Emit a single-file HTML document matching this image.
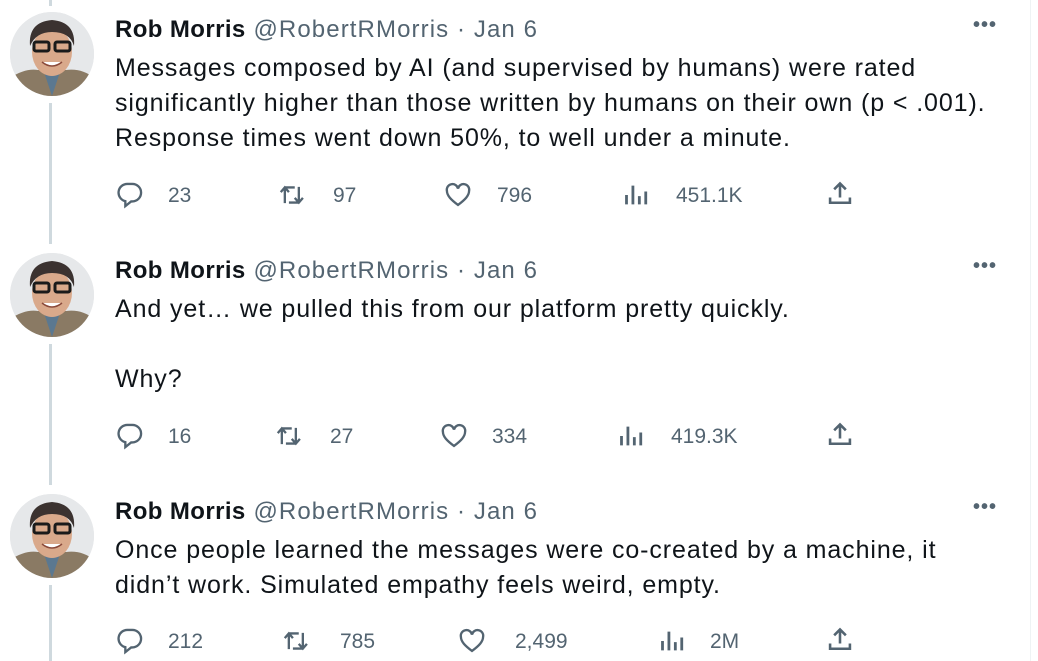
<!DOCTYPE html>
<html><head><meta charset="utf-8"><style>
*{margin:0;padding:0;box-sizing:border-box}
body{width:1038px;height:661px;background:#fff;position:relative;overflow:hidden;font-family:"Liberation Sans",sans-serif;color:#0f1419}
.line{position:absolute;left:49px;width:3px;background:#cfd9de}
.av{position:absolute;left:10px;width:84px;height:84px;border-radius:50%;overflow:hidden;background:#e4e6e8}
.t{position:absolute;left:115px;font-size:25px;white-space:nowrap;letter-spacing:0.9px}
.hd{position:absolute;left:115px;font-size:24px;white-space:nowrap;letter-spacing:1.1px}
.hd b{color:#0f1419;letter-spacing:0.4px}
.hd span{color:#536471}
.dots{position:absolute;left:973px;font-size:20px;color:#536471;letter-spacing:1px;font-weight:bold}
.ic{position:absolute}
.n{position:absolute;font-size:21px;color:#536471}
.border{position:absolute;left:1030px;top:0;width:1px;height:661px;background:#eff3f4}
</style></head><body>
<div class="border"></div>
<div class="line" style="top:0;height:6px"></div>
<div class="line" style="top:103px;height:141px"></div>
<div class="line" style="top:344px;height:141px"></div>
<div class="line" style="top:585px;height:76px"></div>

<svg width="0" height="0" style="position:absolute">
<defs>
<g id="face">
<rect width="84" height="84" fill="#e6e8ea"/>
<path d="M0 84 L0 66 Q15 56 28 58 L56 58 Q72 56 84 66 L84 84Z" fill="#8a7a64"/>
<path d="M34 60 L42 84 L50 60Z" fill="#5b7890"/>
<ellipse cx="42" cy="40" rx="20" ry="24" fill="#d9a98b"/>
<path d="M20 34 Q18 10 42 8 Q66 10 64 34 Q60 20 42 20 Q26 20 20 34Z" fill="#3b3230"/>
<rect x="24" y="30" width="15" height="9" rx="2" fill="none" stroke="#1a1a1a" stroke-width="3"/>
<rect x="45" y="30" width="15" height="9" rx="2" fill="none" stroke="#1a1a1a" stroke-width="3"/>
<path d="M32 50 Q42 58 52 50" fill="#fff" stroke="#8a4a3a" stroke-width="1.5"/>
</g>
<g id="reply"><path d="M10 2.5h4a7.5 7.5 0 0 1 0 15h-1l-5 4v-4.2A7.5 7.5 0 0 1 10 2.5z" fill="none" stroke="#536471" stroke-width="2"/></g>
<g id="rt"><path d="M5 19V6.5M1.5 9.5L5 5.5l3.5 4M5 5.5h8.5M17 5v12.5M13.5 14.5L17 18.5l3.5-4M17 18.5H8.5" fill="none" stroke="#536471" stroke-width="2"/></g>
<g id="like"><path d="M12 20.5C6 16 2.5 12.5 2.5 8.5A4.8 4.8 0 0 1 12 6.5a4.8 4.8 0 0 1 9.5 2c0 4-3.5 7.5-9.5 12z" fill="none" stroke="#536471" stroke-width="2"/></g>
<g id="views"><path d="M3 20V12M8.5 20V4M14 20V13M19.5 20V9" stroke="#536471" stroke-width="2.4"/></g>
<g id="share"><path d="M12 3v12M7 8l5-5 5 5M3.5 15v4.5h17V15" fill="none" stroke="#536471" stroke-width="2.2"/></g>
</defs></svg>

<!-- Tweet 1 -->
<svg class="av" style="top:12px" viewBox="0 0 84 84"><use href="#face"/></svg>
<div class="hd" style="top:16px"><b>Rob Morris</b> <span>@RobertRMorris · Jan 6</span></div>
<div class="dots" style="top:14px">•••</div>
<div class="t" style="top:54px">Messages composed by AI (and supervised by humans) were rated</div>
<div class="t" style="top:89px">significantly higher than those written by humans on their own (p &lt; .001).</div>
<div class="t" style="top:124px">Response times went down 50%, to well under a minute.</div>
<svg class="ic" style="left:116px;top:181px" width="28" height="28" viewBox="0 0 24 24"><use href="#reply"/></svg><div class="n" style="left:168px;top:184px">23</div>
<svg class="ic" style="left:279px;top:181px" width="28" height="28" viewBox="0 0 24 24"><use href="#rt"/></svg><div class="n" style="left:333px;top:184px">97</div>
<svg class="ic" style="left:444px;top:181px" width="28" height="28" viewBox="0 0 24 24"><use href="#like"/></svg><div class="n" style="left:497px;top:184px">796</div>
<svg class="ic" style="left:623px;top:181px" width="28" height="28" viewBox="0 0 24 24"><use href="#views"/></svg><div class="n" style="left:676px;top:184px">451.1K</div>
<svg class="ic" style="left:826px;top:180px" width="28" height="28" viewBox="0 0 24 24"><use href="#share"/></svg>

<!-- Tweet 2 -->
<svg class="av" style="top:253px" viewBox="0 0 84 84"><use href="#face"/></svg>
<div class="hd" style="top:257px"><b>Rob Morris</b> <span>@RobertRMorris · Jan 6</span></div>
<div class="dots" style="top:255px">•••</div>
<div class="t" style="top:295px">And yet… we pulled this from our platform pretty quickly.</div>
<div class="t" style="top:365px">Why?</div>
<svg class="ic" style="left:116px;top:422px" width="28" height="28" viewBox="0 0 24 24"><use href="#reply"/></svg><div class="n" style="left:168px;top:425px">16</div>
<svg class="ic" style="left:276px;top:422px" width="28" height="28" viewBox="0 0 24 24"><use href="#rt"/></svg><div class="n" style="left:330px;top:425px">27</div>
<svg class="ic" style="left:440px;top:422px" width="28" height="28" viewBox="0 0 24 24"><use href="#like"/></svg><div class="n" style="left:492px;top:425px">334</div>
<svg class="ic" style="left:618px;top:422px" width="28" height="28" viewBox="0 0 24 24"><use href="#views"/></svg><div class="n" style="left:671px;top:425px">419.3K</div>
<svg class="ic" style="left:826px;top:421px" width="28" height="28" viewBox="0 0 24 24"><use href="#share"/></svg>

<!-- Tweet 3 -->
<svg class="av" style="top:494px" viewBox="0 0 84 84"><use href="#face"/></svg>
<div class="hd" style="top:498px"><b>Rob Morris</b> <span>@RobertRMorris · Jan 6</span></div>
<div class="dots" style="top:496px">•••</div>
<div class="t" style="top:536px">Once people learned the messages were co-created by a machine, it</div>
<div class="t" style="top:571px">didn’t work. Simulated empathy feels weird, empty.</div>
<svg class="ic" style="left:116px;top:627px" width="28" height="28" viewBox="0 0 24 24"><use href="#reply"/></svg><div class="n" style="left:168px;top:630px">212</div>
<svg class="ic" style="left:283px;top:627px" width="28" height="28" viewBox="0 0 24 24"><use href="#rt"/></svg><div class="n" style="left:340px;top:630px">785</div>
<svg class="ic" style="left:458px;top:627px" width="28" height="28" viewBox="0 0 24 24"><use href="#like"/></svg><div class="n" style="left:515px;top:630px">2,499</div>
<svg class="ic" style="left:659px;top:627px" width="28" height="28" viewBox="0 0 24 24"><use href="#views"/></svg><div class="n" style="left:710px;top:630px">2M</div>
<svg class="ic" style="left:826px;top:626px" width="28" height="28" viewBox="0 0 24 24"><use href="#share"/></svg>
</body></html>
